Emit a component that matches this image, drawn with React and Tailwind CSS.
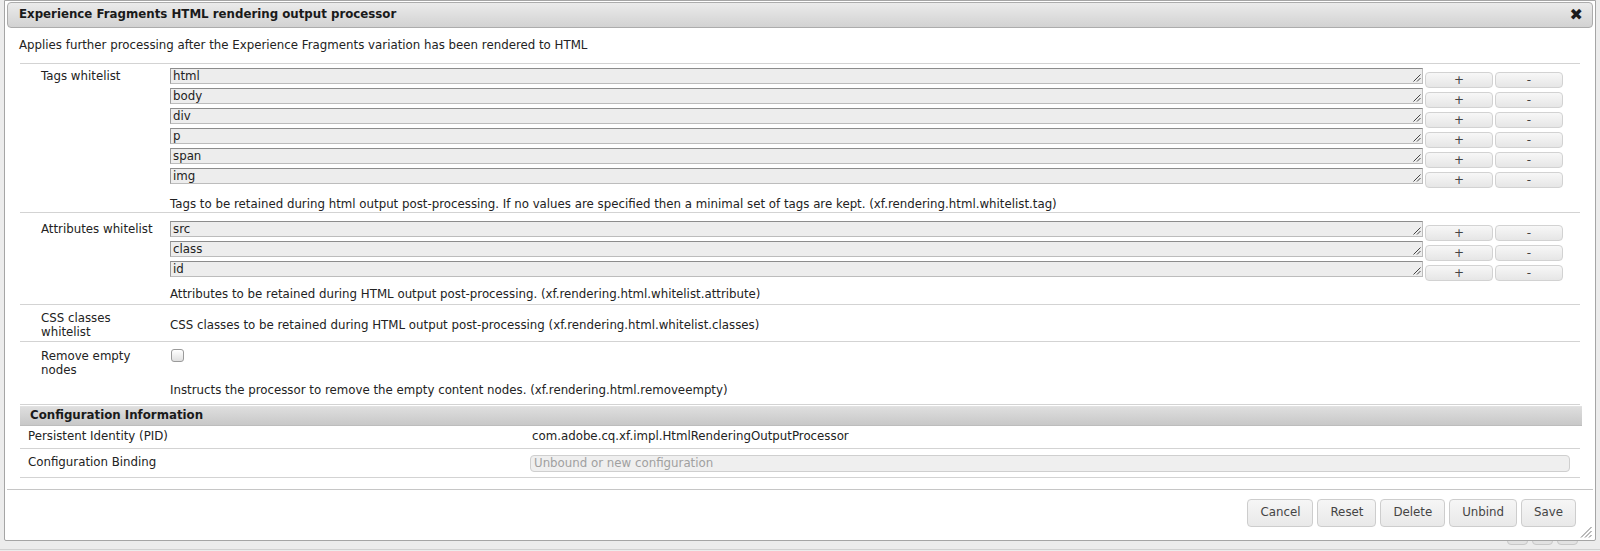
import React from "react";

const Grip = () => (
  <svg width="8" height="8" viewBox="0 0 8 8" className="absolute right-[1px] bottom-[1px]">
    <path d="M7.5 0.5 L0.5 7.5 M7.5 4 L4 7.5" stroke="#444" strokeWidth="1" fill="none" />
  </svg>
);

const SmallBtn = ({ children }) => (
  <button className="ml-[2px] mt-[4px] w-[68px] h-[16px] rounded-[4px] border border-[#d2d2d2] bg-gradient-to-b from-[#f7f7f7] to-[#e6e6e6] text-[#444] text-[12px] leading-[14px] flex items-center justify-center font-['DejaVu_Sans',sans-serif]">
    {children}
  </button>
);

const InputRow = ({ v }) => (
  <div className="flex items-start h-[20px]">
    <div className="relative w-[1253px] h-[16px] bg-[#ededed] border border-[#bcbcbc] border-t-[#8c8c8c] border-l-[#9c9c9c] px-[2px] leading-[14px] overflow-hidden text-[#222]">
      {v}
      <Grip />
    </div>
    <SmallBtn>+</SmallBtn>
    <SmallBtn>-</SmallBtn>
  </div>
);

const DlgBtn = ({ children }) => (
  <button className="h-[28px] px-[12px] rounded-[4px] border border-[#cdcdcd] bg-gradient-to-b from-[#f6f6f6] to-[#e9e9e9] text-[#444] text-[11.8px] font-['DejaVu_Sans',sans-serif]">
    {children}
  </button>
);

export default function App() {
  return (
    <div className="relative w-[1600px] h-[551px] overflow-hidden bg-[#ececec] font-['DejaVu_Sans',sans-serif] text-[11.8px] text-[#222]">
      {/* background page elements peeking below */}
      <div className="absolute left-[1507px] top-[530px] w-[21px] h-[15px] rounded-[4px] border border-[#c8c8c8] bg-[#e2e2e2]" />
      <div className="absolute left-[1532px] top-[530px] w-[21px] h-[15px] rounded-[4px] border border-[#c8c8c8] bg-[#e2e2e2]" />
      <div className="absolute left-[1557px] top-[530px] w-[21px] h-[15px] rounded-[4px] border border-[#c8c8c8] bg-[#e2e2e2]" />
      <div className="absolute left-0 top-[549px] w-[1600px] h-[1px] bg-[#d0d0d0]" />

      {/* dialog */}
      <div className="absolute left-[4px] top-0 w-[1592px] h-[541px] bg-white border border-[#a5a5a5] rounded-b-[2px] flex flex-col">
        {/* title bar */}
        <div className="mx-[2px] mt-[1px] h-[26px] rounded-[4px] border border-[#acacac] bg-gradient-to-b from-[#ebebeb] to-[#d2d2d2] flex items-center justify-between pl-[11px] pr-[9px]">
          <span className="font-bold text-[11.8px] text-[#1a1a1a]">Experience Fragments HTML rendering output processor</span>
          <span className="text-[16px] leading-none text-[#1a1a1a]">✖</span>
        </div>

        {/* description */}
        <div className="pl-[14px] mt-[10px] leading-[14px]">
          Applies further processing after the Experience Fragments variation has been rendered to HTML
        </div>

        {/* form table */}
        <div className="mx-[15px] mt-[11px] border-t border-[#d3d3d3]">
          {/* Tags whitelist */}
          <div className="flex border-b border-[#d3d3d3] pt-[4px] pb-[1px]">
            <div className="w-[150px] shrink-0 pl-[21px] pr-[14px] pt-[1px] leading-[14px]">Tags whitelist</div>
            <div className="flex flex-col">
              {["html", "body", "div", "p", "span", "img"].map((t) => (
                <InputRow key={t} v={t} />
              ))}
              <div className="mt-[9px] leading-[14px]">
                Tags to be retained during html output post-processing. If no values are specified then a minimal set of tags are kept. (xf.rendering.html.whitelist.tag)
              </div>
            </div>
          </div>

          {/* Attributes whitelist */}
          <div className="flex border-b border-[#d3d3d3] pt-[8px] pb-[3px]">
            <div className="w-[150px] shrink-0 pl-[21px] pr-[14px] pt-[1px] leading-[14px]">Attributes whitelist</div>
            <div className="flex flex-col">
              {["src", "class", "id"].map((t) => (
                <InputRow key={t} v={t} />
              ))}
              <div className="mt-[6px] leading-[14px]">
                Attributes to be retained during HTML output post-processing. (xf.rendering.html.whitelist.attribute)
              </div>
            </div>
          </div>

          {/* CSS classes whitelist */}
          <div className="flex items-center border-b border-[#d3d3d3] pt-[6px] pb-[2px]">
            <div className="w-[150px] shrink-0 pl-[21px] pr-[14px] leading-[14px]">CSS classes whitelist</div>
            <div className="leading-[14px]">
              CSS classes to be retained during HTML output post-processing (xf.rendering.html.whitelist.classes)
            </div>
          </div>

          {/* Remove empty nodes */}
          <div className="flex border-b border-[#d3d3d3] pt-[7px] pb-[7px]">
            <div className="w-[150px] shrink-0 pl-[21px] pr-[14px] leading-[14px]">Remove empty nodes</div>
            <div className="flex flex-col">
              <div className="h-[20px] pl-[1px] pt-[0px]">
                <div className="w-[13px] h-[13px] rounded-[3px] border border-[#9a9a9a] bg-gradient-to-b from-white to-[#e0e0e0]" />
              </div>
              <div className="mt-[14px] leading-[14px]">
                Instructs the processor to remove the empty content nodes. (xf.rendering.html.removeempty)
              </div>
            </div>
          </div>
        </div>

        {/* Configuration Information */}
        <div className="mx-[15px] mt-[1px]">
          <div className="h-[20px] mr-[-2px] border-t border-[#e2e2e2] border-b border-b-[#bdbdbd] bg-gradient-to-b from-[#dedede] to-[#c8c8c8] flex items-center pl-[10px] font-bold text-[#1a1a1a]">
            Configuration Information
          </div>
          <div className="flex items-center h-[23px] border-b border-[#d3d3d3]">
            <div className="w-[512px] shrink-0 pl-[8px]">Persistent Identity (PID)</div>
            <div>com.adobe.cq.xf.impl.HtmlRenderingOutputProcessor</div>
          </div>
          <div className="flex items-center h-[29px] border-b border-[#d3d3d3]">
            <div className="w-[510px] shrink-0 pl-[8px]">Configuration Binding</div>
            <div className="w-[1040px] h-[17px] rounded-[4px] border border-[#cfcfcf] bg-[#efefef] px-[3px] leading-[15px] text-[#a0a0a0]">
              Unbound or new configuration
            </div>
          </div>
        </div>

        {/* button pane */}
        <div className="relative mx-[2px] mt-[11px] flex-1 border-t border-[#c6c6c6]">
          <div className="flex justify-end gap-[4px] pt-[9px] pr-[17px]">
            <DlgBtn>Cancel</DlgBtn>
            <DlgBtn>Reset</DlgBtn>
            <DlgBtn>Delete</DlgBtn>
            <DlgBtn>Unbind</DlgBtn>
            <DlgBtn>Save</DlgBtn>
          </div>
          <svg width="12" height="12" viewBox="0 0 12 12" className="absolute right-[1px] bottom-[2px]">
            <path d="M11.5 1 L1 11.5 M11.5 5 L5 11.5 M11.5 9 L9 11.5" stroke="#777" strokeWidth="1" fill="none" />
          </svg>
        </div>
      </div>
    </div>
  );
}
